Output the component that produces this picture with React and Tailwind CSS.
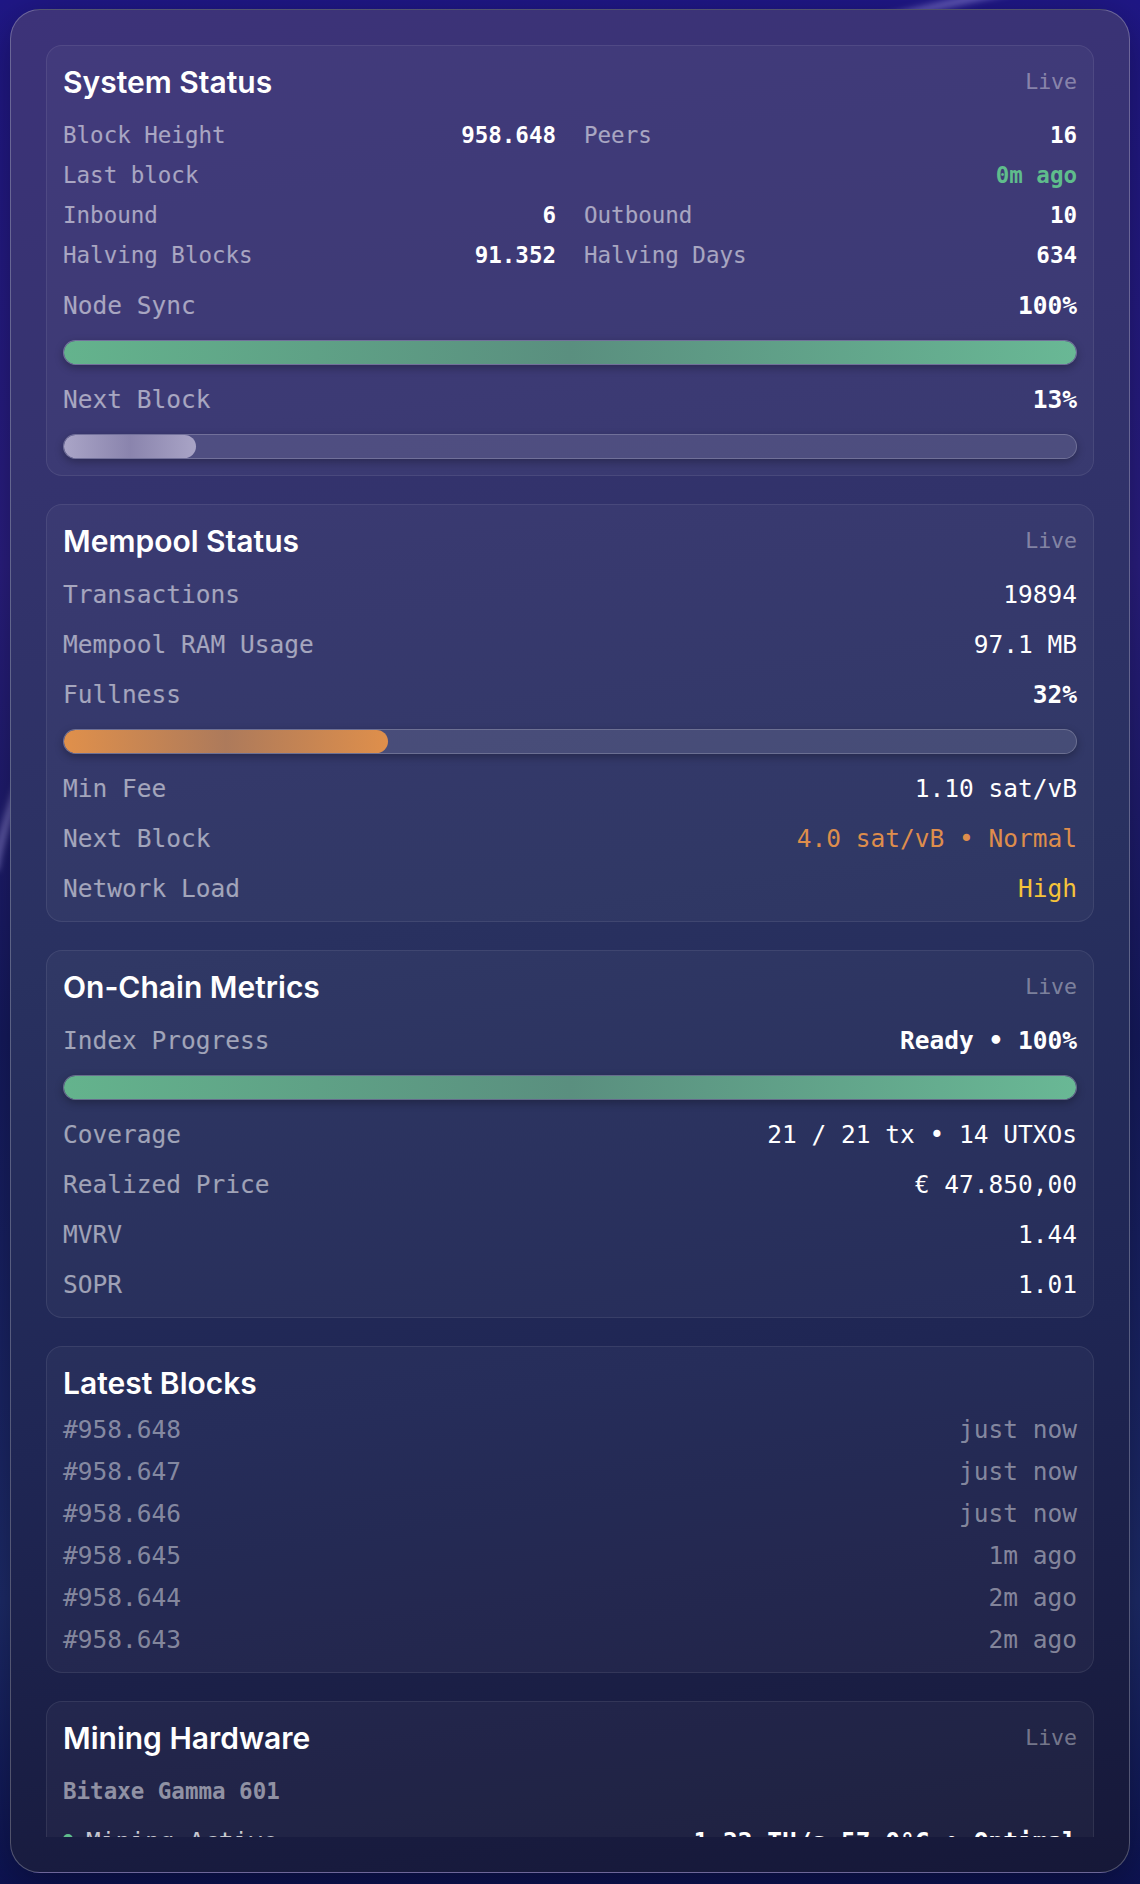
const MONO = "font-['DejaVu_Sans_Mono','Liberation_Mono',monospace]";
const SANS = "font-['Inter','Noto_Sans',sans-serif]";

const TONES = {
  white: 'text-white',
  green: 'text-[#5fbd8c]',
  orange: 'text-[#de8d4c]',
  yellow: 'text-[#f5c43a]',
};

const BAR_FILLS = {
  green: 'bg-[linear-gradient(90deg,#64b38d_0%,#5a8f7f_50%,#69b895_100%)]',
  orange: 'bg-[linear-gradient(90deg,#e0904b_0%,#ad7a5b_50%,#df8f4b_100%)]',
  slate: 'bg-[linear-gradient(90deg,#aaa5c7_0%,#8a84ad_50%,#a9a4c6_100%)]',
};

const SYSTEM_GRID = [
  { label: 'Block Height', value: '958.648' },
  { label: 'Peers', value: '16' },
  { label: 'Last block', value: '0m ago', tone: 'green', wide: true },
  { label: 'Inbound', value: '6' },
  { label: 'Outbound', value: '10' },
  { label: 'Halving Blocks', value: '91.352' },
  { label: 'Halving Days', value: '634' },
];

const LATEST_BLOCKS = [
  { height: '#958.648', age: 'just now' },
  { height: '#958.647', age: 'just now' },
  { height: '#958.646', age: 'just now' },
  { height: '#958.645', age: '1m ago' },
  { height: '#958.644', age: '2m ago' },
  { height: '#958.643', age: '2m ago' },
];

function Card({ title, live = true, bodyClass = 'mt-[17px] gap-[17px]', children }) {
  return (
    <section className="shrink-0 rounded-2xl border border-white/[0.08] bg-white/[0.035] p-4">
      <header className="flex h-10 items-center justify-between">
        <h2 className={`${SANS} text-[30px] font-semibold text-white`}>{title}</h2>
        {live && <span className="text-[21.5px] text-white/40">Live</span>}
      </header>
      <div className={`flex flex-col ${bodyClass}`}>{children}</div>
    </section>
  );
}

function Stat({ label, value, tone = 'white', strong = false, small = false }) {
  return (
    <div
      className={`flex items-center justify-between leading-[33px] ${small ? 'text-[22.5px]' : 'text-[24.5px]'}`}
    >
      <span className="text-white/55">{label}</span>
      <span className={`${TONES[tone]} ${strong ? 'font-bold' : ''}`}>{value}</span>
    </div>
  );
}

function Bar({ value, fill, last = false }) {
  return (
    <div
      className={`mt-px h-[25px] overflow-hidden rounded-full border border-white/20 bg-white/10 shadow-[0_3px_8px_rgba(0,0,0,0.28)] ${
        last ? '' : 'mb-px'
      }`}
    >
      <div className={`h-full rounded-full ${BAR_FILLS[fill]}`} style={{ width: `${value}%` }} />
    </div>
  );
}

function SystemStatus() {
  return (
    <Card title="System Status">
      <div className="grid grid-cols-2 gap-x-7 gap-y-[7px]">
        {SYSTEM_GRID.map((s) => (
          <div key={s.label} className={s.wide ? 'col-span-2' : ''}>
            <Stat label={s.label} value={s.value} tone={s.tone} strong small />
          </div>
        ))}
      </div>
      <Stat label="Node Sync" value="100%" strong />
      <Bar value={100} fill="green" />
      <Stat label="Next Block" value="13%" strong />
      <Bar value={13} fill="slate" last />
    </Card>
  );
}

function MempoolStatus() {
  return (
    <Card title="Mempool Status">
      <Stat label="Transactions" value="19894" />
      <Stat label="Mempool RAM Usage" value="97.1 MB" />
      <Stat label="Fullness" value="32%" strong />
      <Bar value={32} fill="orange" />
      <Stat label="Min Fee" value="1.10 sat/vB" />
      <Stat label="Next Block" value="4.0 sat/vB • Normal" tone="orange" />
      <Stat label="Network Load" value="High" tone="yellow" />
    </Card>
  );
}

function OnChainMetrics() {
  return (
    <Card title="On-Chain Metrics">
      <Stat label="Index Progress" value="Ready • 100%" strong />
      <Bar value={100} fill="green" />
      <Stat label="Coverage" value="21 / 21 tx • 14 UTXOs" />
      <Stat label="Realized Price" value="€ 47.850,00" />
      <Stat label="MVRV" value="1.44" />
      <Stat label="SOPR" value="1.01" />
    </Card>
  );
}

function LatestBlocks() {
  return (
    <Card title="Latest Blocks" live={false} bodyClass="mt-[10px] gap-[9px]">
      {LATEST_BLOCKS.map((b) => (
        <div
          key={b.height}
          className="flex items-center justify-between text-[24.5px] leading-[33px] text-white/45"
        >
          <span>{b.height}</span>
          <span>{b.age}</span>
        </div>
      ))}
    </Card>
  );
}

function MiningHardware() {
  return (
    <Card title="Mining Hardware">
      <div className="text-[22.5px] font-bold leading-[33px] text-white/50">Bitaxe Gamma 601</div>
      <div className="flex items-center justify-between text-[24.5px] leading-[33px]">
        <span className="flex items-center gap-[13px] text-white/75">
          <span className="mb-[5px] h-[10px] w-[10px] rounded-full bg-[#5fbd8c]" />
          Mining Active
        </span>
        <span className="font-bold text-white">1.22 TH/s 57.0°C • Optimal</span>
      </div>
    </Card>
  );
}

export default function App() {
  return (
    <div
      className={`relative min-h-[1884px] overflow-hidden bg-[linear-gradient(180deg,#1f1786_0%,#2a1e80_30%,#151a5e_55%,#1d2b69_85%,#0d1352_100%)] px-[10px] pt-[9px] pb-[11px] ${MONO}`}
    >
      {/* soft light arc behind the panel */}
      <svg
        className="pointer-events-none absolute inset-0 h-full w-full"
        viewBox="0 0 1140 1884"
        preserveAspectRatio="none"
      >
        <defs>
          <filter id="arc-blur" x="-10%" y="-10%" width="120%" height="120%">
            <feGaussianBlur stdDeviation="3" />
          </filter>
        </defs>
        <path
          d="M -5 870 C 25 700, 250 300, 600 120 C 750 45, 900 15, 1010 -10"
          fill="none"
          stroke="rgba(190,180,255,0.42)"
          strokeWidth="8"
          filter="url(#arc-blur)"
        />
      </svg>

      <main className="relative flex h-[1864px] flex-col rounded-[30px] border border-white/25 bg-[linear-gradient(172deg,#3d3379_0%,#35336f_22%,#293160_48%,#1f2654_72%,#161838_100%)] p-[35px] shadow-[0_10px_40px_rgba(0,0,0,0.35)]">
        <div className="flex flex-1 flex-col gap-7 overflow-hidden">
          <SystemStatus />
          <MempoolStatus />
          <OnChainMetrics />
          <LatestBlocks />
          <MiningHardware />
        </div>
      </main>
    </div>
  );
}
